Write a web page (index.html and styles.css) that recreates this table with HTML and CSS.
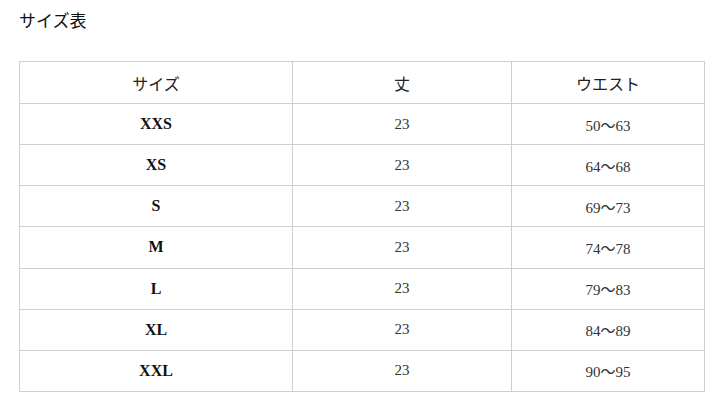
FILE: index.html
```html
<!DOCTYPE html>
<html lang="ja">
<head>
<meta charset="utf-8">
<link rel="stylesheet" href="styles.css">
</head>
<body>
<div class="page">
  <h2 class="title">サイズ表</h2>
  <table class="size-table">
    <colgroup>
      <col class="c1"><col class="c2"><col class="c3">
    </colgroup>
    <thead>
      <tr><th>サイズ</th><th>丈</th><th>ウエスト</th></tr>
    </thead>
    <tbody>
      <tr><td class="sz">XXS</td><td>23</td><td>50〜63</td></tr>
      <tr><td class="sz">XS</td><td>23</td><td>64〜68</td></tr>
      <tr><td class="sz">S</td><td>23</td><td>69〜73</td></tr>
      <tr><td class="sz">M</td><td>23</td><td>74〜78</td></tr>
      <tr><td class="sz">L</td><td>23</td><td>79〜83</td></tr>
      <tr><td class="sz">XL</td><td>23</td><td>84〜89</td></tr>
      <tr><td class="sz">XXL</td><td>23</td><td>90〜95</td></tr>
    </tbody>
  </table>
</div>
</body>
</html>
```
FILE: styles.css
```css
html, body {
  margin: 0;
  padding: 0;
  background: #fff;
}
body {
  font-family: "Liberation Serif", "Noto Sans CJK JP", serif;
  color: #222;
}
.page {
  padding: 11px 14px 0 19px;
}
.title {
  margin: 0;
  font-size: 17px;
  font-weight: normal;
  line-height: 22px;
  color: #111;
}
.size-table {
  margin-top: 28px;
  width: 685px;
  border-collapse: collapse;
  table-layout: fixed;
}
.c1 { width: 273px; }
.c2 { width: 219px; }
.c3 { width: 193px; }
.size-table th,
.size-table td {
  border: 1px solid #cfcfcf;
  text-align: center;
  padding: 0;
  height: 40.15px;
}
.size-table th {
  font-weight: normal;
  font-size: 16px;
  height: 41px;
  color: #222;
}
.size-table td {
  font-size: 15px;
  color: #333;
}
.size-table td.sz {
  font-weight: bold;
  font-size: 16px;
  color: #111;
}
```
